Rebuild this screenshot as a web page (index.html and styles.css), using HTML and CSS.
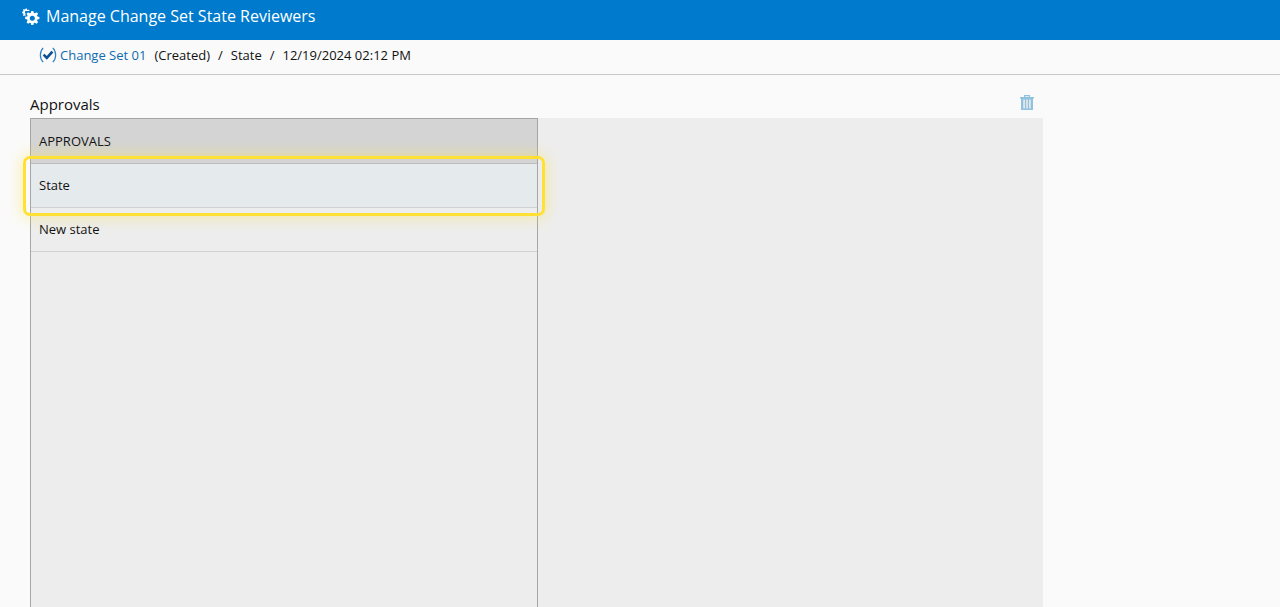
FILE: index.html
```html
<!DOCTYPE html>
<html lang="en">
<head>
<meta charset="utf-8">
<title>Manage Change Set State Reviewers</title>
<link rel="stylesheet" href="styles.css">
</head>
<body>
<header class="topbar">
  <svg class="gears" width="18" height="18" viewBox="0 0 18 18" aria-hidden="true">
    <path fill="#fff" d="M3.600.6h1.300l.2 1.100.7.3.9-.6.9.9-.6.9.3.7 1.100.2v1.300l-1.100.2-.3.7.6.9-.9.9-.9-.6-.7.3-.2 1.100H3.600l-.2-1.100-.7-.3-.9.6-.9-.9.6-.9-.3-.7L.1 5V3.700l1.100-.2.3-.7-.6-.9.9-.9.9.6.7-.3z"/>
    <circle cx="4.300" cy="4.300" r="1.300" fill="#007acc"/>
    <path fill="#007acc" d="M3.500 3h14.500v15H3.500z"/>
    <g transform="translate(-1.200 -1)">
      <path fill="#fff" d="M10.400 3.900h2.200l.3 1.900 1.200.5 1.600-1.100 1.600 1.600-1.100 1.600.5 1.200 1.900.3v2.200l-1.900.3-.5 1.200 1.100 1.600-1.600 1.600-1.600-1.100-1.200.5-.3 1.900h-2.200l-.3-1.900-1.200-.5-1.600 1.100-1.600-1.600 1.100-1.600-.5-1.200-1.900-.3v-2.200l1.900-.3.5-1.200-1.100-1.600 1.600-1.600 1.600 1.100 1.200-.5z"/>
      <circle cx="11.500" cy="11.300" r="2.500" fill="#007acc"/>
    </g>
  </svg>
  <h1 class="title">Manage Change Set State Reviewers</h1>
</header>
<nav class="crumbs">
  <svg class="check" width="18" height="18" viewBox="0 0 18 18" aria-hidden="true">
    <path fill="none" stroke="#2f7fc1" stroke-width="1.200" d="M4.200 1.800C.4 5.600.4 12.400 4.200 16.200M13.800 1.800c3.800 3.800 3.800 10.600 0 14.400"/>
    <path fill="none" stroke="#0d4f8f" stroke-width="2.600" d="M4.600 8.600l3.200 3.200 5.600-6.200"/>
  </svg>
  <a class="link" href="#">Change Set 01</a>
  <span class="status">(Created)</span>
  <span>/</span>
  <span>State</span>
  <span>/</span>
  <span>12/19/2024 02:12 PM</span>
</nav>
<main class="content">
  <div class="section-head">
    <h2 class="section-title">Approvals</h2>
    <svg class="trash" width="14" height="15" viewBox="0 0 14 15" aria-hidden="true">
      <path fill="#8fc1e0" d="M0 2h14v1.500H0zM4 0h6v3H8.800V1.200H5.200V3H4zM1 3.500h12V15H1z"/>
      <path fill="#e4e6e8" d="M3.200 4.500h1.800v9H3.200zM6.100 4.500h1.800v9H6.100zM9 4.500h1.800v9H9z"/>
    </svg>
  </div>
  <div class="panel">
    <div class="list">
      <div class="list-head">APPROVALS</div>
      <div class="row row-selected">State</div>
      <div class="row">New state</div>
      <div class="highlight"></div>
    </div>
  </div>
</main>
</body>
</html>
```
FILE: styles.css
```css
* { box-sizing: border-box; }
html, body { height: 100%; }
body {
  margin: 0;
  background: #fafafa;
  color: #111;
  font-family: "Open Sans", "Liberation Sans", sans-serif;
  font-size: 13px;
  overflow: hidden;
}
.topbar {
  height: 40px;
  background: #007acc;
  color: #fff;
  display: flex;
  align-items: flex-start;
  padding: 7px 0 0 22px;
  gap: 6px;
}
.gears { flex: none; margin-top: 1px; }
.title {
  margin: 0;
  font-size: 16px;
  font-weight: 400;
  line-height: 19px;
}
.crumbs {
  height: 35px;
  border-bottom: 1px solid #c8c8c8;
  display: flex;
  align-items: center;
  padding: 0 0 4px 39px;
  line-height: 18px;
}
.check { flex: none; margin-right: 3px; }
.link { color: #0f6cb0; text-decoration: none; }
.status { margin-left: 8px; }
.crumbs span + span { margin-left: 8px; }
.content { padding: 19px 0 0 30px; width: 1043px; }
.section-head {
  display: flex;
  justify-content: space-between;
  align-items: flex-start;
  height: 24px;
  padding-right: 9px;
}
.section-title {
  margin: 0;
  font-size: 15px;
  font-weight: 400;
  line-height: 20px;
}
.trash { margin-top: 1px; }
.panel {
  background: #ededed;
  height: 489px;
}
.list {
  position: relative;
  width: 508px;
  height: 100%;
  border: 1px solid #a6a6a6;
  border-bottom: 0;
}
.list-head {
  height: 45px;
  background: #d4d4d4;
  border-bottom: 1px solid #bdbdbd;
  padding: 0 8px;
  line-height: 44px;
  font-size: 13px;
}
.row {
  height: 44px;
  padding: 0 8px;
  line-height: 43px;
  font-size: 13px;
  border-bottom: 1px solid #d2d2d2;
}
.row-selected { background: #e5eaed; }
.highlight {
  position: absolute;
  left: -8px;
  top: 37px;
  width: 522px;
  height: 60px;
  border: 3px solid #ffe033;
  border-radius: 7px;
  box-shadow: 0 0 14px 2px rgba(255, 230, 70, .4);
  pointer-events: none;
}
```
